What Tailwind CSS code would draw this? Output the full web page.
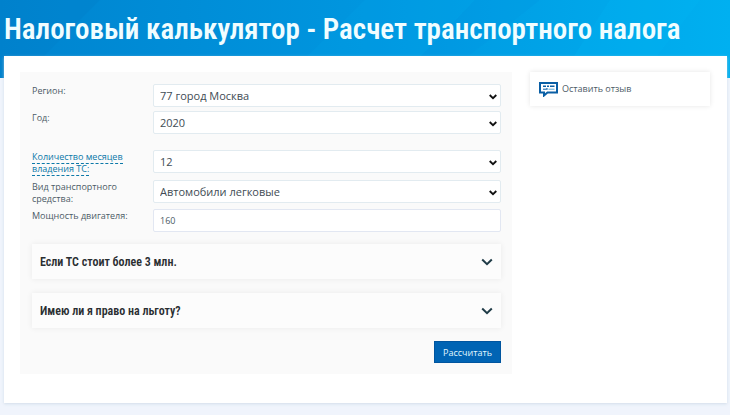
<!DOCTYPE html>
<html lang="ru">
<head>
<meta charset="UTF-8">
<meta name="viewport" content="width=device-width, initial-scale=1.0">
<title>Налоговый калькулятор</title>
<script src="https://cdn.jsdelivr.net/npm/@tailwindcss/browser@4"></script>
</head>
<body class="bg-[#f0f4fc] min-h-screen font-['Open_Sans',sans-serif] text-[#4c5b66]">

<!-- Header -->
<header class="relative overflow-hidden bg-linear-to-r from-[#0084cf] via-[#0096df] to-[#00b0f0] px-1 pt-2.5 pb-[30px]">
    <svg class="absolute inset-0 w-full h-full" viewBox="0 0 730 78" preserveAspectRatio="none" aria-hidden="true">
        <path d="M0 0H100L22 78H0Z" fill="#0079c4" opacity=".2"/>
        <path d="M365 0H475L400 78H285Z" fill="#00a6ec" opacity=".2"/>
        <path d="M475 0H540L440 78H400Z" fill="#0090dc" opacity=".15"/>
        <path d="M610 0H700L640 78H560Z" fill="#00b8f6" opacity=".2"/>
    </svg>
    <h1 class="relative text-[29px] leading-[38px] font-semibold text-[#f0fdff] whitespace-nowrap font-['Roboto_Condensed','Liberation_Sans_Narrow','Roboto',sans-serif]">Налоговый калькулятор - Расчет транспортного налога</h1>
</header>

<main class="relative -mt-[22px] ml-1 mr-[3px] mb-3 bg-white shadow-sm shadow-slate-300/60 flex items-start gap-[18px] pt-4 pl-4 pr-[17px] pb-[29px]">

    <!-- Calculator -->
    <form class="flex-1 min-w-0 bg-[#fafafa] pt-3 pl-3 pr-[11px] pb-[11px]">
        <div class="grid grid-cols-[100px_1fr] gap-x-[21px] text-[9px] leading-[12px]">
            <label for="region" class="pt-px">Регион:</label>
            <div class="relative mb-1">
                <select id="region" class="block w-full h-[23px] appearance-none bg-white border border-[#e2ebf0] rounded-xs pl-1.5 pr-6 text-[11px] leading-[20px] text-[#414c54]">
                    <option>77 город Москва</option>
                </select>
                <svg class="absolute right-1 top-[9px] w-2 h-2 pointer-events-none" viewBox="0 0 8 8" fill="none" stroke="#111" stroke-width="1.8"><path d="M.7 2L4 5.2 7.3 2"/></svg>
            </div>

            <label for="year" class="pt-px">Год:</label>
            <div class="relative mb-4">
                <select id="year" class="block w-full h-[23px] appearance-none bg-white border border-[#e2ebf0] rounded-xs pl-1.5 pr-6 text-[11px] leading-[20px] text-[#414c54]">
                    <option>2020</option>
                </select>
                <svg class="absolute right-1 top-[9px] w-2 h-2 pointer-events-none" viewBox="0 0 8 8" fill="none" stroke="#111" stroke-width="1.8"><path d="M.7 2L4 5.2 7.3 2"/></svg>
            </div>

            <label for="months" class="pt-px text-[#0b78a8]"><span class="border-b border-dashed border-[#0b78a8]">Количество месяцев владения ТС:</span></label>
            <div class="relative mb-[7px]">
                <select id="months" class="block w-full h-[23px] appearance-none bg-white border border-[#e2ebf0] rounded-xs pl-1.5 pr-6 text-[11px] leading-[20px] text-[#414c54]">
                    <option>12</option>
                </select>
                <svg class="absolute right-1 top-[9px] w-2 h-2 pointer-events-none" viewBox="0 0 8 8" fill="none" stroke="#111" stroke-width="1.8"><path d="M.7 2L4 5.2 7.3 2"/></svg>
            </div>

            <label for="vehicle" class="pt-px">Вид транспортного средства:</label>
            <div class="relative mb-1.5">
                <select id="vehicle" class="block w-full h-[23px] appearance-none bg-white border border-[#e2ebf0] rounded-xs pl-1.5 pr-6 text-[11px] leading-[20px] text-[#414c54]">
                    <option>Автомобили легковые</option>
                </select>
                <svg class="absolute right-1 top-[9px] w-2 h-2 pointer-events-none" viewBox="0 0 8 8" fill="none" stroke="#111" stroke-width="1.8"><path d="M.7 2L4 5.2 7.3 2"/></svg>
            </div>

            <label for="power" class="pt-px whitespace-nowrap">Мощность двигателя:</label>
            <input id="power" type="text" value="160" class="block w-full h-[23px] bg-white border border-[#e2e7f2] rounded-xs px-1.5 text-[9px] text-[#4c5b66]">
        </div>

        <!-- Extra sections -->
        <div class="mt-3 space-y-3.5 font-['Roboto_Condensed','Liberation_Sans_Narrow','Roboto',sans-serif]">
            <button type="button" aria-expanded="false" class="flex w-full h-[35px] items-center justify-between bg-[#fcfcfc] pl-2 pr-2 text-xs font-semibold text-[#2a2e31] shadow-[0_0_6px_rgba(0,0,0,0.07)]">
                Если ТС стоит более 3 млн.
                <svg class="w-3 h-3" viewBox="0 0 12 12" fill="none" stroke="#1f3b47" stroke-width="2"><path d="M1.2 3.5L6 8.2 10.8 3.5"/></svg>
            </button>
            <button type="button" aria-expanded="false" class="flex w-full h-[35px] items-center justify-between bg-[#fcfcfc] pl-2 pr-2 text-xs font-semibold text-[#2a2e31] shadow-[0_0_6px_rgba(0,0,0,0.07)]">
                Имею ли я право на льготу?
                <svg class="w-3 h-3" viewBox="0 0 12 12" fill="none" stroke="#1f3b47" stroke-width="2"><path d="M1.2 3.5L6 8.2 10.8 3.5"/></svg>
            </button>
        </div>

        <div class="mt-[13px] flex justify-end">
            <button type="submit" class="h-[22px] px-2 bg-[#0064b4] border border-[#00559f] text-[9px] leading-none text-[#e0f8ff]">Рассчитать</button>
        </div>
    </form>

    <!-- Feedback -->
    <a href="#" class="flex w-[180px] h-[34px] shrink-0 items-center gap-1 pl-[9px] bg-white text-[9px] shadow-[0_0_5px_rgba(0,0,0,0.1)]">
        <svg class="w-[19px] h-[15px]" viewBox="0 0 19 15" fill="none" aria-hidden="true">
            <path d="M1 1H18V10.5H8.5L5 13.5V10.5H1Z" fill="#fff" stroke="#0a5fa5" stroke-width="2"/>
            <path d="M4 4.3H7M8 4.3H10M11 4.3H15.5" stroke="#0a5fa5" stroke-width="1.6"/>
            <path d="M4 7.2H8.5L7.5 6" stroke="#0a5fa5" stroke-width="1"/>
            <path d="M9.5 7.2H15.5" stroke="#58a6d4" stroke-width="1"/>
        </svg>
        Оставить отзыв
    </a>
</main>

</body>
</html>
